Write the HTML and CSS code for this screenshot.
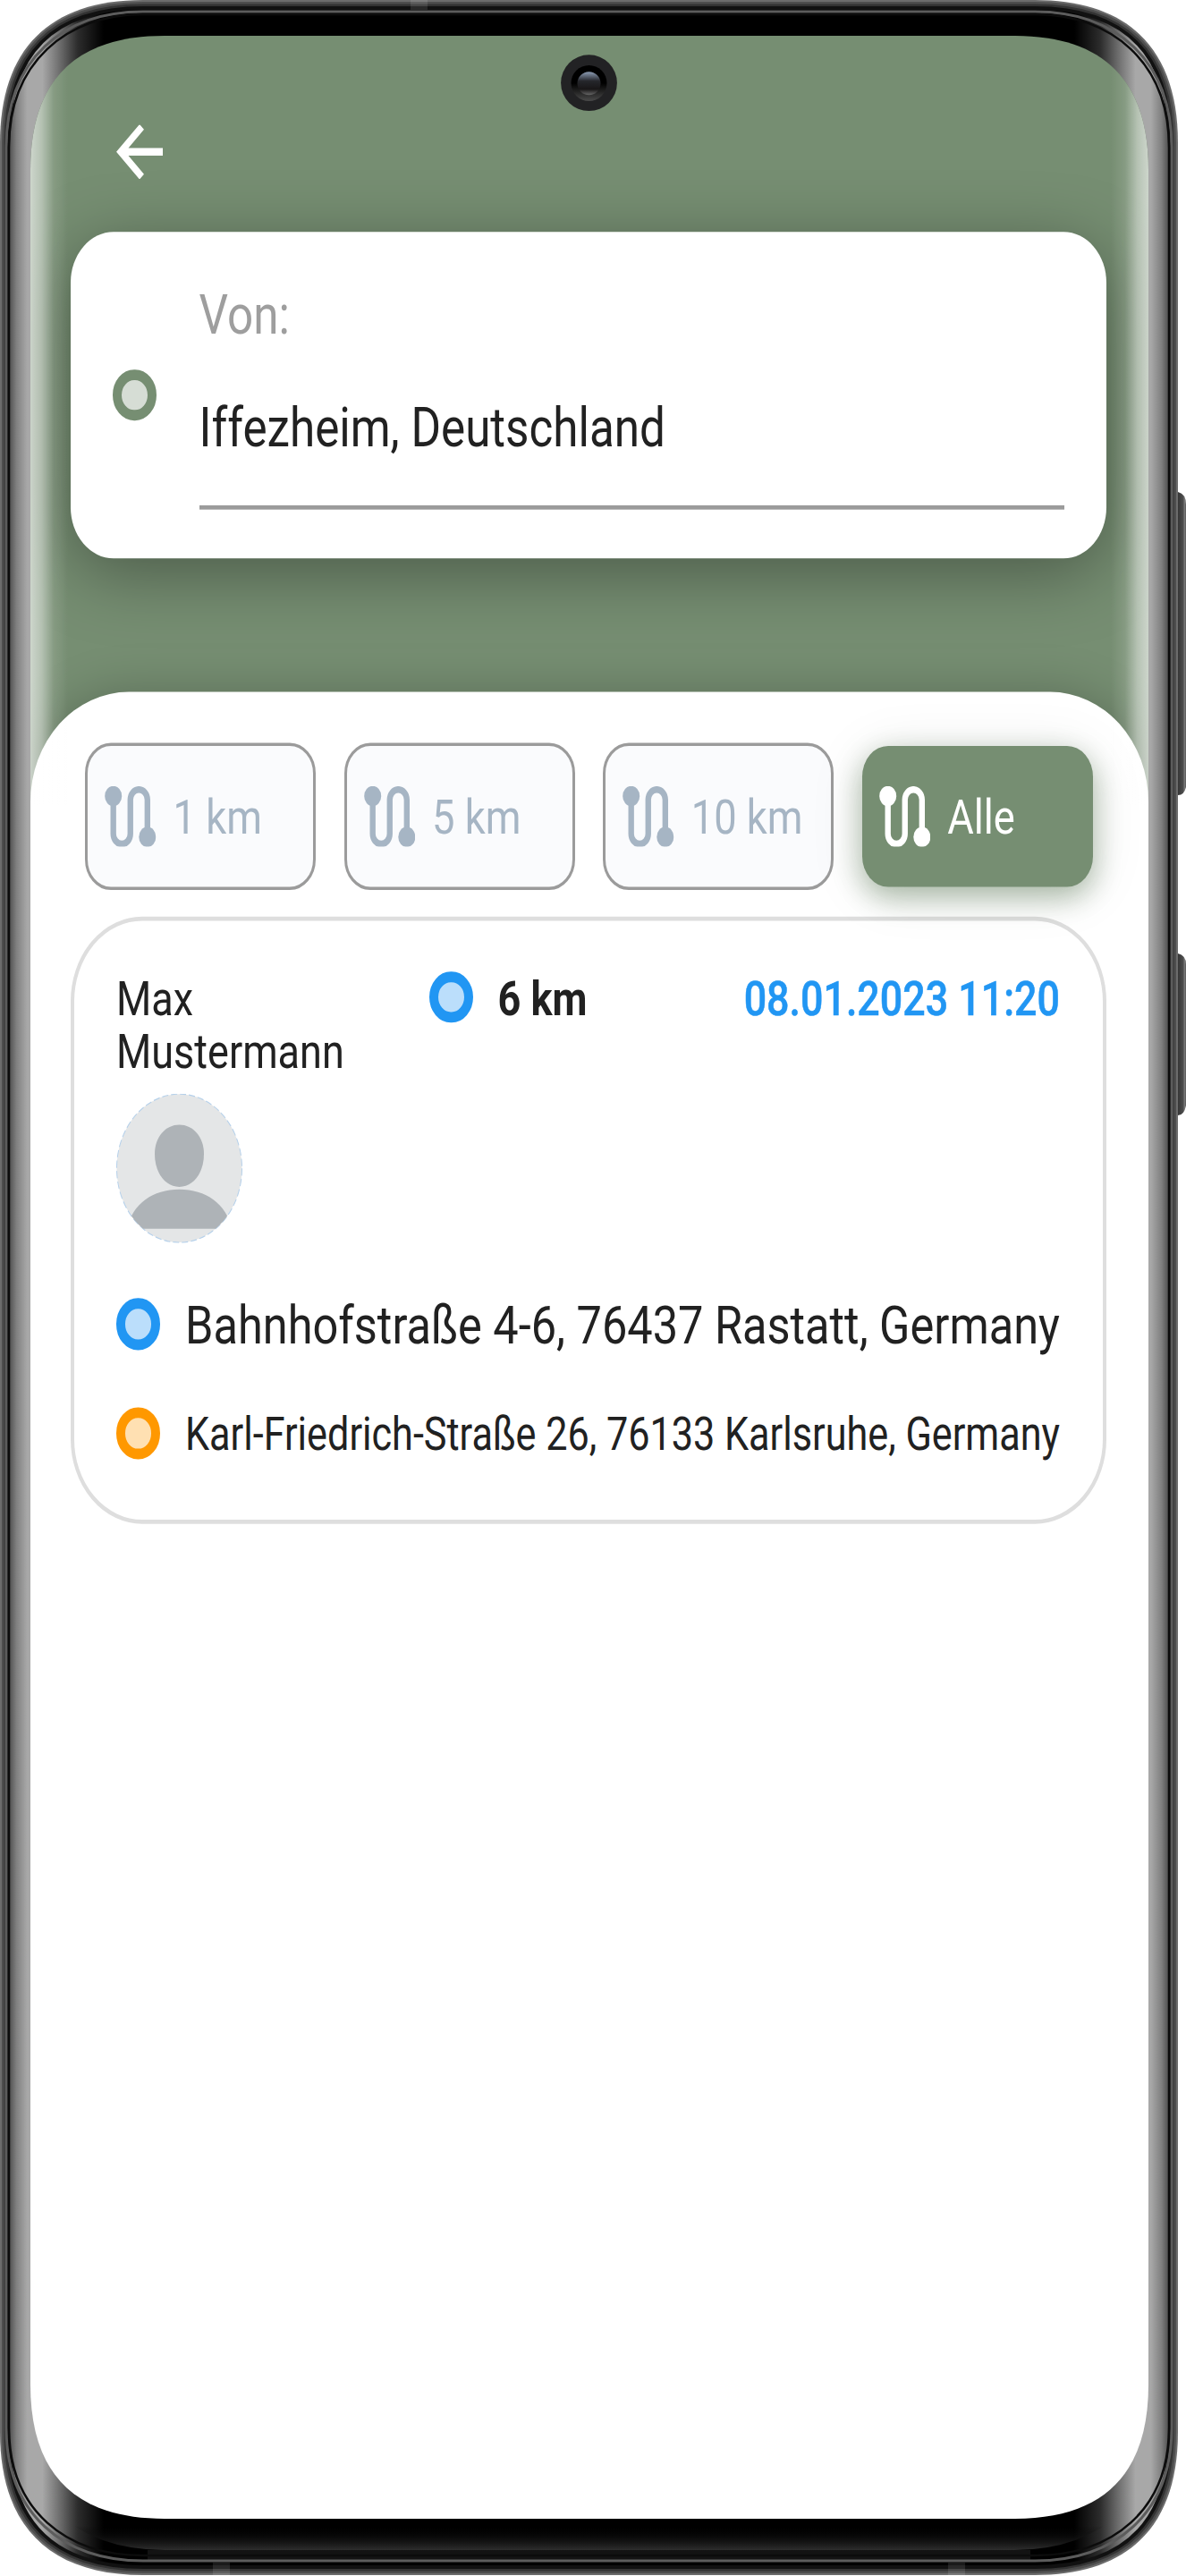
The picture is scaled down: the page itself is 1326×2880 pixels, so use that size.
FILE: index.html
```html
<!DOCTYPE html>
<html lang="de">
<head>
<meta charset="utf-8">
<title>Fahrten</title>
<link rel="stylesheet" href="styles.css">
</head>
<body>
<svg class="defs" width="0" height="0">
  <symbol id="route" viewBox="0 0 172 172">
    <path d="M29 28V134.500a28.500 28.500 0 0 0 57 0V38a28.500 28.500 0 0 1 57 0V143" fill="none" stroke="currentColor" stroke-width="19"/>
    <circle cx="29" cy="28" r="28.500" fill="currentColor"/>
    <circle cx="143" cy="143.500" r="28.500" fill="currentColor"/>
  </symbol>
</svg>
<div class="phone">
  <main class="screen">
    <header class="top">
      <svg class="back" viewBox="0 0 52 51" preserveAspectRatio="none"><path d="M28.500 2L5 25.500L28.500 49M5 25.500H52" fill="none" stroke="#fff" stroke-width="7"/></svg>
      <section class="search">
        <span class="dot green"></span>
        <div class="field">
          <label>Von:</label>
          <div class="value">Iffezheim, Deutschland</div>
        </div>
      </section>
    </header>
    <section class="sheet">
      <nav class="chips">
        <button class="chip"><svg><use href="#route"/></svg><span>1 km</span></button>
        <button class="chip"><svg><use href="#route"/></svg><span>5 km</span></button>
        <button class="chip"><svg><use href="#route"/></svg><span>10 km</span></button>
        <button class="chip active"><svg><use href="#route"/></svg><span>Alle</span></button>
      </nav>
      <article class="ride">
        <div class="summary">
          <div class="driver">Max<br>Mustermann</div>
          <span class="dot blue"></span>
          <strong class="distance">6 km</strong>
          <time class="date">08.01.2023 11:20</time>
        </div>
        <svg class="avatar" viewBox="0 0 141 141">
          <clipPath id="round"><circle cx="70.500" cy="70.500" r="70"/></clipPath>
          <circle cx="70.500" cy="70.500" r="70" fill="#e4e6e7" stroke="#b5d0ea" stroke-dasharray="7 3"/>
          <g clip-path="url(#round)" fill="#aeb3b7">
            <path d="M70.500 29.500C86 29.500 98 41 98 57C98 75 86 88 70.500 88S43 75 43 57C43 41 55 29.500 70.500 29.500Z"/>
            <path d="M12 127.500C18 104 41 90.500 70.500 90.500S123 104 129 127.500Z"/>
          </g>
        </svg>
        <div class="stop from"><span class="dot blue"></span><span>Bahnhofstraße 4-6, 76437 Rastatt, Germany</span></div>
        <div class="stop to"><span class="dot orange"></span><span>Karl-Friedrich-Straße 26, 76133 Karlsruhe, Germany</span></div>
      </article>
    </section>
  </main>
  <svg class="frame" viewBox="0 0 1326 2880">
    <defs>
      <linearGradient id="bezel" gradientUnits="userSpaceOnUse" x1="0" y1="0" x2="1317" y2="0">
        <stop offset=".008" stop-color="#505050"/><stop offset=".014" stop-color="#808080"/><stop offset=".023" stop-color="#a8a8a8"/><stop offset=".036" stop-color="#a8a8a8"/><stop offset=".05" stop-color="#707070"/><stop offset=".066" stop-color="#2c2c2c"/><stop offset=".088" stop-color="#000"/>
        <stop offset=".912" stop-color="#000"/><stop offset=".934" stop-color="#2c2c2c"/><stop offset=".95" stop-color="#707070"/><stop offset=".964" stop-color="#a8a8a8"/><stop offset=".977" stop-color="#a8a8a8"/><stop offset=".986" stop-color="#808080"/><stop offset=".992" stop-color="#505050"/>
      </linearGradient>
      <linearGradient id="glow" gradientUnits="userSpaceOnUse" x1="34" y1="0" x2="1284" y2="0">
        <stop offset="0" stop-color="#fff" stop-opacity=".64"/><stop offset=".01" stop-color="#fff" stop-opacity=".46"/><stop offset=".021" stop-color="#fff" stop-opacity=".12"/><stop offset=".034" stop-color="#fff" stop-opacity="0"/>
        <stop offset=".966" stop-color="#fff" stop-opacity="0"/><stop offset=".979" stop-color="#fff" stop-opacity=".12"/><stop offset=".99" stop-color="#fff" stop-opacity=".46"/><stop offset="1" stop-color="#fff" stop-opacity=".64"/>
      </linearGradient>
      <linearGradient id="chin" x1="0" y1="0" x2="0" y2="1"><stop offset=".4" stop-color="#000" stop-opacity="0"/><stop offset="1" stop-color="#2e2e2e"/></linearGradient>
      <linearGradient id="lens" x1="0" y1="0" x2="0" y2="1"><stop offset="0" stop-color="#8d9db5"/><stop offset=".4" stop-color="#25262b"/><stop offset=".75" stop-color="#181617"/><stop offset="1" stop-color="#666"/></linearGradient>
      <linearGradient id="ring" x1="0" y1="0" x2="0" y2="1"><stop offset=".5" stop-color="#000"/><stop offset="1" stop-color="#4a4a4a"/></linearGradient>
      <linearGradient id="key" x1="1312" y1="0" x2="1326" y2="0" gradientUnits="userSpaceOnUse"><stop offset=".3" stop-color="#333"/><stop offset=".75" stop-color="#4c4c4c"/><stop offset=".9" stop-color="#7a7a7a"/><stop offset="1" stop-color="#555"/></linearGradient>
      <clipPath id="body"><path d="M0 160C0 55 55 0 160 0H1157C1262 0 1317 55 1317 160V2719C1317 2824 1262 2879 1157 2879H160C55 2879 0 2824 0 2719Z"/></clipPath>
      <mask id="hole"><rect width="1326" height="2880" fill="#fff"/><path d="M34 190C34 90 84 40 184 40H1134C1234 40 1284 90 1284 190V2666C1284 2766 1234 2816 1134 2816H184C84 2816 34 2766 34 2666Z" fill="#000"/></mask>
    </defs>
    <path d="M34 190C34 90 84 40 184 40H1134C1234 40 1284 90 1284 190V900H34Z" fill="url(#glow)"/>
    <g mask="url(#hole)">
      <path d="M1312 550H1317Q1326 552 1326 564V880Q1324 889 1317 889H1312ZM1312 1066H1317Q1326 1068 1326 1078V1236Q1324 1247 1317 1247H1312Z" fill="url(#key)"/>
      <g clip-path="url(#body)">
        <path d="M0 160C0 55 55 0 160 0H1157C1262 0 1317 55 1317 160V2719C1317 2824 1262 2879 1157 2879H160C55 2879 0 2824 0 2719Z" fill="url(#bezel)"/>
        <path d="M60 2806H1257Q1210 2851 1134 2851H184Q107 2851 60 2806Z" fill="url(#chin)"/>
        <path d="M165 2851H1152V2862H165Z" fill="#131313"/>
        <g fill="none">
          <path d="M0 160C0 55 55 0 160 0H1157C1262 0 1317 55 1317 160V2719C1317 2824 1262 2879 1157 2879H160C55 2879 0 2824 0 2719Z" stroke="#111" stroke-width="22"/>
          <path d="M0 160C0 55 55 0 160 0H1157C1262 0 1317 55 1317 160V2719C1317 2824 1262 2879 1157 2879H160C55 2879 0 2824 0 2719Z" stroke="#333" stroke-width="14"/>
          <path d="M0 160C0 55 55 0 160 0H1157C1262 0 1317 55 1317 160V2719C1317 2824 1262 2879 1157 2879H160C55 2879 0 2824 0 2719Z" stroke="#4e4e4e" stroke-width="9"/>
          <path d="M0 160C0 55 55 0 160 0H1157C1262 0 1317 55 1317 160V2719C1317 2824 1262 2879 1157 2879H160C55 2879 0 2824 0 2719Z" stroke="#6c6c6c" stroke-width="4"/>
          <path d="M7 165C7 66 71 13 160 13H1157C1246 13 1310 66 1310 165V2714C1310 2811 1246 2863 1157 2863H160C71 2863 7 2811 7 2714Z" stroke="#5c5c5c" stroke-width="3"/>
          <path d="M10 165C10 70 74 16 160 16H1157C1243 16 1307 70 1307 165V2714C1307 2807 1243 2857 1157 2857H160C74 2857 10 2807 10 2714Z" stroke="#0c0c0c" stroke-width="2.500"/>
        </g>
        <path d="M459 0H478V11H459ZM238 2865H257V2879H238ZM1060 2865H1079V2879H1060Z" fill="#fff" opacity=".1"/>
      </g>
    </g>
    <circle cx="658.500" cy="92.700" r="31.400" fill="#222224"/>
    <circle cx="658.500" cy="93" r="20" fill="url(#ring)"/>
    <circle cx="658.500" cy="93.200" r="13" fill="url(#lens)"/>
  </svg>
</div>
</body>
</html>
```
FILE: styles.css
```css
* { box-sizing: border-box; }
body { margin: 0; background: #fff; }
.defs { display: block; }
.phone {
  position: relative;
  width: 1326px;
  height: 2880px;
  padding: 40px 42px 64px 34px;
  overflow: hidden;
  font-family: Roboto, "Liberation Sans", sans-serif;
}
.screen {
  width: 1250px;
  height: 2342.6px;
  transform: scaleY(1.185);
  transform-origin: 0 0;
  background: #768e72;
  border-radius: 120px / 101px;
  overflow: hidden;
  color: #212121;
}
.frame { position: absolute; inset: 0; width: 1326px; height: 2880px; }
.top { height: 619px; padding: 83.5px 45px 0; }
.back { display: block; width: 52px; height: 51px; margin-left: 51px; }
.search {
  display: flex;
  width: 1158px;
  height: 308px;
  margin-top: 50.5px;
  padding: 0 47px;
  align-items: center;
  gap: 48px;
  background: #fff;
  border-radius: 48px;
  box-shadow: 0 14px 70px rgba(0, 0, 0, .36);
}
.dot {
  flex: none;
  width: 48.5px;
  height: 48.5px;
  border: 10px solid;
  border-radius: 50%;
}
.green { border-color: #768e72; background: #d6ddd5; }
.blue { border-color: #2196f3; background: #bbdefb; }
.orange { border-color: #ff9800; background: #ffe0b2; }
.field { flex: 1; height: 308px; }
.field label {
  display: block;
  padding-top: 48.6px;
  font-size: 51.2px;
  line-height: 60px;
  color: #9e9e9e;
}
.value {
  height: 153.7px;
  padding-top: 46px;
  font-size: 51.2px;
  line-height: 60px;
  border-bottom: 4px solid #9b9b9b;
}
.sheet {
  height: 1724px;
  padding: 48px 45px 0;
  background: #fff;
  border-radius: 110px 110px 0 0 / 104px 104px 0 0;
  box-shadow: 0 0 50px rgba(0, 0, 0, .22);
}
.chips { display: flex; gap: 31.6px; padding-left: 16px; }
.chip {
  display: flex;
  align-items: center;
  width: 258px;
  height: 139px;
  padding: 0 0 0 19px;
  gap: 19px;
  border: 3px solid #9b9b9b;
  border-radius: 29px;
  background: #fafbfd;
  color: #a6b5c4;
  font: 45.3px/54px Roboto, "Liberation Sans", sans-serif;
}
.chip svg { width: 57.5px; height: 57.5px; }
.chip span { padding-top: 2px; white-space: nowrap; }
.chip.active {
  height: 133px;
  margin-top: 3px;
  border: 0;
  background: #768e72;
  color: #fff;
  box-shadow: 0 9px 30px rgba(100, 130, 95, .55), 0 5px 60px rgba(0, 0, 0, .09);
}
.ride {
  width: 1158px;
  height: 573.5px;
  margin-top: 24.5px;
  padding: 48px 47px;
  border: 4px solid #dedede;
  border-radius: 80px;
}
.summary { display: flex; height: 115.5px; font-size: 45px; line-height: 50.6px; }
.driver { width: 350px; padding-top: 1.2px; }
.distance { margin-left: 28px; padding-top: 1.2px; font-weight: 700; }
.date { margin-left: auto; padding: 1.2px 1px 0 0; color: #2196f3; font-size: 44.8px; font-weight: 500; -webkit-text-stroke: .5px #2196f3; }
.avatar { display: block; width: 141px; height: 141px; }
.stop { display: flex; align-items: center; height: 48.5px; gap: 28.5px; white-space: nowrap; }
.stop span + span { padding-top: 2px; }
.from { margin-top: 52px; font-size: 50.5px; }
.to { margin-top: 54.5px; font-size: 43.2px; }
```
